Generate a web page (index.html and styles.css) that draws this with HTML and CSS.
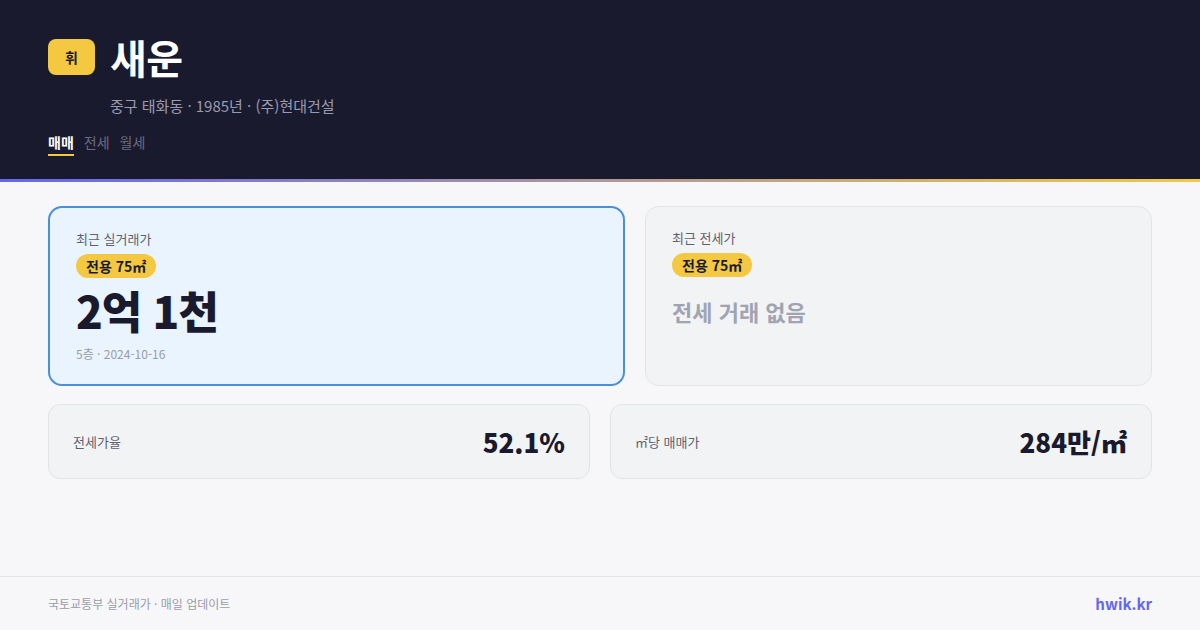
FILE: index.html
```html
<!DOCTYPE html>
<html lang="ko">
<head>
<meta charset="utf-8">
<link rel="stylesheet" href="styles.css">
</head>
<body>
<header class="hero">
  <div class="title-row">
    <span class="logo">휘</span>
    <h1 class="title">새운</h1>
  </div>
  <p class="sub">중구 태화동 · 1985년 · (주)현대건설</p>
  <nav class="tabs">
    <span class="tab active">매매</span>
    <span class="tab">전세</span>
    <span class="tab">월세</span>
  </nav>
</header>
<div class="accent"></div>
<main class="main">
  <section class="top-row">
    <div class="card card-primary">
      <div class="label">최근 실거래가</div>
      <span class="pill">전용 75㎡</span>
      <div class="price">2억 1천</div>
      <div class="meta">5층 · 2024-10-16</div>
    </div>
    <div class="card card-muted">
      <div class="label">최근 전세가</div>
      <span class="pill">전용 75㎡</span>
      <div class="empty">전세 거래 없음</div>
    </div>
  </section>
  <section class="stat-row">
    <div class="stat">
      <span class="stat-label">전세가율</span>
      <span class="stat-value">52.1%</span>
    </div>
    <div class="stat">
      <span class="stat-label">㎡당 매매가</span>
      <span class="stat-value">284만/㎡</span>
    </div>
  </section>
</main>
<footer class="footer">
  <span class="source">국토교통부 실거래가 · 매일 업데이트</span>
  <span class="brand">hwik.kr</span>
</footer>
</body>
</html>
```

FILE: styles.css
```css
* { box-sizing: border-box; margin: 0; padding: 0; }
html, body { width: 1200px; height: 630px; overflow: hidden; }
body {
  background: #f7f7f9;
  font-family: "Noto Sans CJK KR", "Noto Sans", sans-serif;
  color: #1a1a2e;
  display: flex;
  flex-direction: column;
}
.hero {
  background: #1a1a2e;
  height: 179px;
  padding: 33px 48px 0;
}
.title-row { display: flex; align-items: center; gap: 15px; height: 48px; }
.logo {
  width: 47px; height: 36px;
  background: #f5c842;
  border-radius: 8px;
  display: flex; align-items: center; justify-content: center;
  font-size: 14px; font-weight: 700; color: #1a1a2e;
}
.title { font-size: 40px; font-weight: 700; color: #fff; line-height: 48px; letter-spacing: -0.5px; }
.sub {
  margin-top: 15px;
  padding-left: 62px;
  font-size: 15px; line-height: 20px;
  color: #9a9aae;
}
.tabs { display: flex; gap: 10px; margin-top: 16px; }
.tab { font-size: 14px; line-height: 20px; color: #6b6b82; padding-bottom: 2px; }
.tab.active { color: #fff; font-weight: 700; border-bottom: 2px solid #f5c842; }
.accent { height: 3px; background: linear-gradient(90deg, #6366f1, #f5c842); }
.main { flex: 1; padding: 24px 48px 0; }
.top-row { display: grid; grid-template-columns: 577px 1fr; gap: 20px; }
.card { border-radius: 14px; height: 180px; }
.card-primary {
  background: #eaf4ff;
  border: 2px solid #4a90d9;
  padding: 22px 26px;
}
.card-muted {
  background: #f2f3f5;
  border: 1px solid #e2e4e8;
  padding: 22px 26px;
}
.label { font-size: 13px; line-height: 18px; color: #5e6270; }
.pill {
  display: inline-block;
  margin-top: 6px;
  background: #f5c842;
  border-radius: 12px;
  padding: 0 10px;
  font-size: 14px; line-height: 24px; font-weight: 700;
  color: #1a1a2e;
}
.price { font-size: 44px; font-weight: 800; line-height: 52px; margin-top: 6px; letter-spacing: -1px; }
.meta { font-size: 12px; line-height: 16px; color: #9a9ca8; margin-top: 10px; }
.empty { font-size: 22px; font-weight: 700; color: #a0a4b2; margin-top: 19px; line-height: 30px; }
.stat-row { display: grid; grid-template-columns: 1fr 1fr; gap: 20px; margin-top: 18px; }
.stat {
  height: 75px;
  background: #f2f3f5;
  border: 1px solid #e2e4e8;
  border-radius: 12px;
  padding: 0 24px;
  display: flex; align-items: center; justify-content: space-between;
}
.stat-label { font-size: 13px; color: #5e6270; }
.stat-value { font-size: 26px; font-weight: 800; color: #1a1a2e; }
.footer {
  height: 54px;
  border-top: 1px solid #e4e4e8;
  padding: 0 48px;
  display: flex; align-items: center; justify-content: space-between;
}
.source { font-size: 12px; color: #9a9ca8; }
.brand { font-size: 15px; font-weight: 700; color: #6366f1; }
```
